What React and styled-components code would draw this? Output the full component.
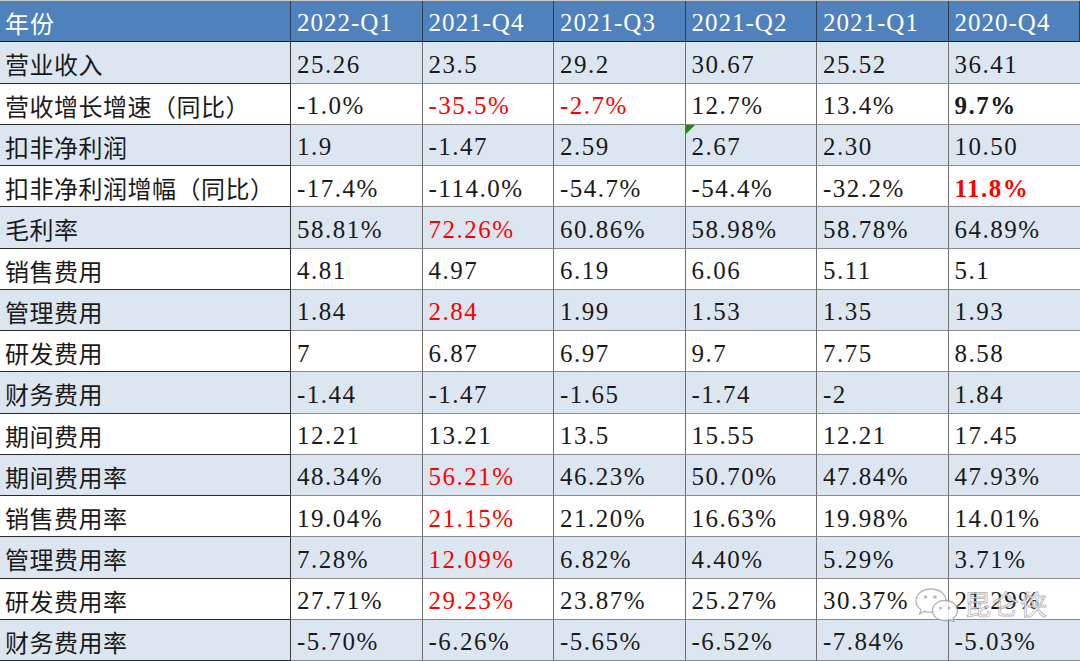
import React from "react";
import styled, { createGlobalStyle, css } from "styled-components";

const Global = createGlobalStyle`
  html, body { margin: 0; padding: 0; background: #ffffff; }
  #root { width: 1080px; height: 661px; overflow: hidden; }
`;

const Sheet = styled.div`
  position: relative;
  width: 1080px;
  height: 661px;
  box-sizing: border-box;
  border-top: 1px solid #c8c8c8;
  display: grid;
  grid-template-columns: 291px repeat(6, 1fr);
  grid-auto-rows: 41.25px;
  font-family: "Liberation Serif", "Noto Sans CJK SC", serif;
`;

const Cell = styled.div`
  box-sizing: border-box;
  display: flex;
  align-items: center;
  padding: 5px 0 0 6px;
  font-size: 25px;
  letter-spacing: 1.5px;
  white-space: nowrap;
  overflow: hidden;
  color: ${(p) => (p.$red ? "#ff0000" : "#1a1a1a")};
  font-weight: ${(p) => (p.$bold ? 700 : 400)};
  background: ${(p) => (p.$shade ? "#dce6f1" : "#ffffff")};
  border-bottom: 1px solid ${(p) => (p.$first ? "#2a2a2a" : "#8c8c8c")};
  border-right: 1px solid #6e6e6e;
  ${(p) =>
    p.$first &&
    css`
      letter-spacing: 0.5px;
      padding-left: 5px;
      font-family: "Noto Sans CJK SC", "Liberation Serif", sans-serif;
      font-size: 24px;
      border-right: 1px solid #3a3a3a;
      padding-top: 3px;
    `}
  ${(p) =>
    p.$last &&
    css`
      border-right: none;
    `}
`;

const HeadCell = styled(Cell)`
  background: #4f81bd;
  color: #ffffff;
  font-weight: 400;
  border-bottom: 1px solid #1e1e1e;
  border-right: 1px solid #2c3e55;
  padding-top: 3px;
  letter-spacing: 1px;
`;

const Corner = styled.span`
  position: absolute;
  top: 0;
  left: 0;
  width: 0;
  height: 0;
  border-top: 9px solid #1a8a1a;
  border-right: 9px solid transparent;
`;

const DataCellWrap = styled(Cell)`
  position: relative;
`;

const Watermark = styled.div`
  position: absolute;
  right: 32px;
  bottom: 38px;
  display: flex;
  align-items: center;
  gap: 4px;
  pointer-events: none;
`;

const WmText = styled.span`
  font-family: "Noto Sans CJK SC", sans-serif;
  font-size: 27px;
  color: rgba(255, 255, 255, 0.75);
  -webkit-text-stroke: 0.8px rgba(110, 110, 110, 0.55);
  letter-spacing: 1px;
`;

const headers = ["年份", "2022-Q1", "2021-Q4", "2021-Q3", "2021-Q2", "2021-Q1", "2020-Q4"];

const rows = [
  ["营业收入", "25.26", "23.5", "29.2", "30.67", "25.52", "36.41"],
  ["营收增长增速（同比）", "-1.0%", { v: "-35.5%", red: true }, { v: "-2.7%", red: true }, "12.7%", "13.4%", { v: "9.7%", bold: true }],
  ["扣非净利润", "1.9", "-1.47", "2.59", { v: "2.67", corner: true }, "2.30", "10.50"],
  ["扣非净利润增幅（同比）", "-17.4%", "-114.0%", "-54.7%", "-54.4%", "-32.2%", { v: "11.8%", red: true, bold: true }],
  ["毛利率", "58.81%", { v: "72.26%", red: true }, "60.86%", "58.98%", "58.78%", "64.89%"],
  ["销售费用", "4.81", "4.97", "6.19", "6.06", "5.11", "5.1"],
  ["管理费用", "1.84", { v: "2.84", red: true }, "1.99", "1.53", "1.35", "1.93"],
  ["研发费用", "7", "6.87", "6.97", "9.7", "7.75", "8.58"],
  ["财务费用", "-1.44", "-1.47", "-1.65", "-1.74", "-2", "1.84"],
  ["期间费用", "12.21", "13.21", "13.5", "15.55", "12.21", "17.45"],
  ["期间费用率", "48.34%", { v: "56.21%", red: true }, "46.23%", "50.70%", "47.84%", "47.93%"],
  ["销售费用率", "19.04%", { v: "21.15%", red: true }, "21.20%", "16.63%", "19.98%", "14.01%"],
  ["管理费用率", "7.28%", { v: "12.09%", red: true }, "6.82%", "4.40%", "5.29%", "3.71%"],
  ["研发费用率", "27.71%", { v: "29.23%", red: true }, "23.87%", "25.27%", "30.37%", "21.29%"],
  ["财务费用率", "-5.70%", "-6.26%", "-5.65%", "-6.52%", "-7.84%", "-5.03%"],
];

function WeChatIcon() {
  return (
    <svg width="46" height="36" viewBox="0 0 46 36">
      <g fill="rgba(255,255,255,0.8)" stroke="rgba(120,120,120,0.55)" strokeWidth="1.3">
        <path d="M17 3 C8 3 2 8.5 2 15 C2 18.6 4 21.6 7 23.6 L5.6 28 L10.6 25.3 C12.6 26 14.7 26.3 17 26.3 C26 26.3 32 20.8 32 15 C32 8.5 26 3 17 3 Z" />
        <path d="M31 14.5 C23.5 14.5 18.5 19.2 18.5 24.6 C18.5 30 23.5 34.6 31 34.6 C32.8 34.6 34.5 34.3 36 33.8 L40.2 36 L39 32.3 C41.8 30.6 43.5 27.8 43.5 24.6 C43.5 19.2 38.5 14.5 31 14.5 Z" />
      </g>
      <g fill="rgba(140,140,140,0.6)">
        <circle cx="11.5" cy="11" r="1.8" />
        <circle cx="21" cy="11" r="1.8" />
        <circle cx="26.5" cy="22" r="1.5" />
        <circle cx="35" cy="22" r="1.5" />
      </g>
    </svg>
  );
}

export default function App() {
  return (
    <>
      <Global />
      <Sheet>
        {headers.map((h, i) => (
          <HeadCell key={h} $first={i === 0} $last={i === headers.length - 1}>
            {h}
          </HeadCell>
        ))}
        {rows.map((row, r) =>
          row.map((c, i) => {
            const item = typeof c === "string" ? { v: c } : c;
            const shade = r % 2 === 0;
            return (
              <DataCellWrap
                key={`${r}-${i}`}
                $first={i === 0}
                $last={i === row.length - 1}
                $shade={shade}
                $red={item.red}
                $bold={item.bold}
              >
                {item.corner && <Corner />}
                {item.v}
              </DataCellWrap>
            );
          })
        )}
        <Watermark>
          <WeChatIcon />
          <WmText>昆仑侠</WmText>
        </Watermark>
      </Sheet>
    </>
  );
}
